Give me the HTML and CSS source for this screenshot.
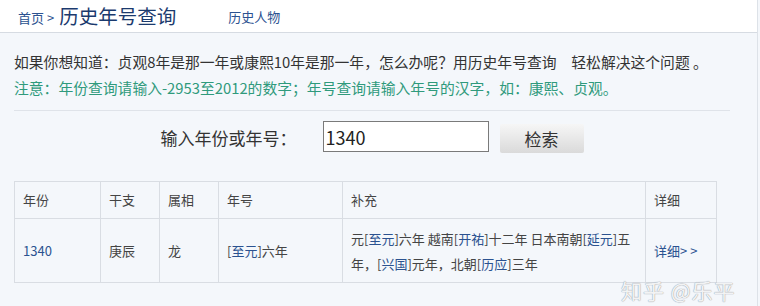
FILE: index.html
```html
<!DOCTYPE html>
<html lang="zh-CN">
<head>
<meta charset="utf-8">
<title>历史年号查询</title>
<link rel="stylesheet" href="styles.css">
</head>
<body>
<div class="page">
  <div class="topbar">
    <a class="crumb">首页 &gt;</a>
    <span class="title">历史年号查询</span>
    <a class="nav">历史人物</a>
  </div>
  <div class="content">
    <p class="intro">如果你想知道：贞观8年是那一年或康熙10年是那一年，怎么办呢？用历史年号查询　轻松解决这个问题 。</p>
    <p class="note">注意：年份查询请输入-2953至2012的数字；年号查询请输入年号的汉字，如：康熙、贞观。</p>
    <div class="divider"></div>
    <div class="search">
      <span class="label">输入年份或年号：</span>
      <input class="box" type="text" value="1340">
      <button class="btn">检索</button>
    </div>
    <table class="result">
      <colgroup>
        <col class="c1"><col class="c2"><col class="c3"><col class="c4"><col class="c5"><col class="c6">
      </colgroup>
      <tr class="head">
        <td>年份</td><td>干支</td><td>属相</td><td>年号</td><td>补充</td><td>详细</td>
      </tr>
      <tr class="row">
        <td><a class="lnk">1340</a></td>
        <td>庚辰</td>
        <td>龙</td>
        <td>[<a class="lnk">至元</a>]六年</td>
        <td class="extra">元[<a class="lnk">至元</a>]六年 越南[<a class="lnk">开祐</a>]十二年 日本南朝[<a class="lnk">延元</a>]五年，[<a class="lnk">兴国</a>]元年，北朝[<a class="lnk">历应</a>]三年</td>
        <td><a class="lnk">详细&gt; &gt;</a></td>
      </tr>
    </table>
  </div>
  <div class="watermark">知乎 @乐平</div>
</div>
</body>
</html>
```
FILE: styles.css
```css
* { box-sizing: border-box; }
html, body { margin: 0; padding: 0; }
body {
  background: #f4f7fb;
  font-family: "Noto Sans CJK SC", "Noto Sans", sans-serif;
  color: #333;
  width: 760px;
  height: 306px;
  overflow: hidden;
}
.page {
  position: relative;
  width: 758px;
  height: 306px;
  border-right: 1px solid #dde2e8;
}
.topbar {
  height: 33px;
  background: #fff;
  border-bottom: 1px solid #d6dbe2;
  display: flex;
  align-items: center;
  padding-left: 18px;
}
.crumb {
  font-size: 13px;
  color: #2b5290;
  line-height: 20px;
  margin-top: 3px;
}
.title {
  font-size: 19.5px;
  color: #1b3a6e;
  margin-left: 5px;
  line-height: 26px;
}
.nav {
  font-size: 13px;
  color: #2b5290;
  margin-left: 52px;
  line-height: 20px;
  margin-top: 2px;
}
.content {
  padding: 0 14px;
}
.intro, .note {
  margin: 0;
  font-size: 14.8px;
  line-height: 26px;
  white-space: nowrap;
}
.intro {
  margin-top: 16px;
  color: #333;
}
.note {
  color: #2f9a7c;
}
.divider {
  margin-top: 9px;
  width: 716px;
  height: 1px;
  background: #dfe3e9;
}
.search {
  margin-top: 10px;
  display: flex;
  justify-content: center;
  align-items: flex-start;
  width: 716px;
}
.label {
  font-size: 17px;
  line-height: 31px;
  color: #333;
  margin-top: 1px;
  width: 162px;
}
.box {
  width: 166px;
  height: 31px;
  border: 1px solid #7a7a7a;
  background: #fff;
  font-family: "Noto Sans CJK SC", "Noto Sans", sans-serif;
  font-size: 18px;
  color: #222;
  padding: 0 2px;
  margin: 0;
  outline: none;
}
.btn {
  margin: 3px 0 0 11px;
  width: 84px;
  height: 29px;
  border: none;
  border-radius: 2px;
  background: linear-gradient(#f6f6f6, #dadada);
  font-family: "Noto Sans CJK SC", sans-serif;
  font-size: 17px;
  color: #333;
  padding: 0;
  line-height: 29px;
}
.result {
  margin-top: 28px;
  border-collapse: collapse;
  table-layout: fixed;
  width: 702px;
  font-size: 13px;
  color: #444;
}
.c1 { width: 86px; }
.c2 { width: 59px; }
.c3 { width: 59px; }
.c4 { width: 124px; }
.c5 { width: 303px; }
.c6 { width: 71px; }
.result td {
  border: 1px solid #d9dde3;
  padding: 0 8px;
  vertical-align: middle;
}
.head td {
  height: 37px;
  line-height: 20px;
}
.row td {
  height: 64px;
  line-height: 25px;
}
.lnk {
  color: #2b5290;
}
.watermark {
  position: absolute;
  left: 621px;
  top: 276px;
  font-size: 21px;
  line-height: 28px;
  color: rgba(255, 255, 255, 0.9);
  text-shadow: 0 0 1px #9aa0a8, 0 0 1px #9aa0a8;
  letter-spacing: 1px;
}
```
